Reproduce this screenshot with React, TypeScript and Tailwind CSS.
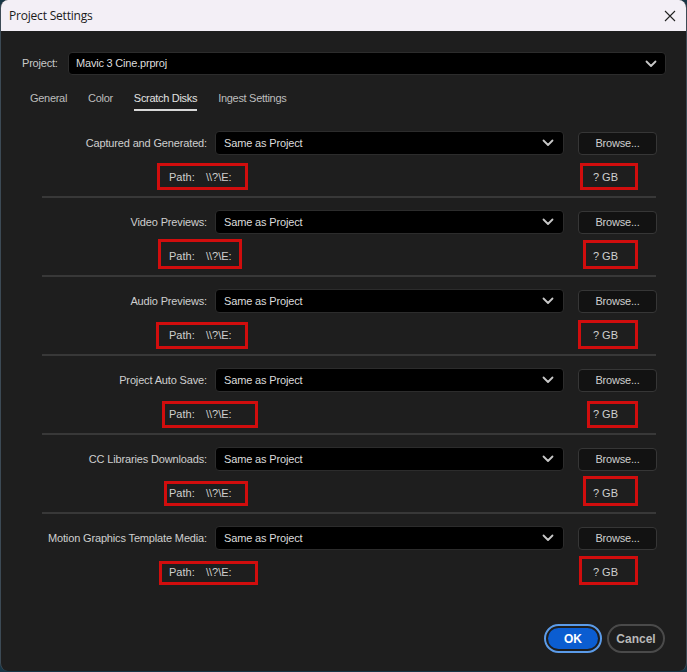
import React from 'react';

type Box = { x: number; y: number; w: number; h: number };

interface DiskRow {
  label: string;
  path: Box;
  gb: Box;
}

const rows: DiskRow[] = [
  { label: 'Captured and Generated:', path: { x: 156, y: 32, w: 91, h: 27 }, gb: { x: 579, y: 32, w: 58, h: 27 } },
  { label: 'Video Previews:', path: { x: 157, y: 29, w: 84, h: 30 }, gb: { x: 582, y: 30, w: 55, h: 29 } },
  { label: 'Audio Previews:', path: { x: 155, y: 33, w: 92, h: 27 }, gb: { x: 577, y: 31, w: 60, h: 29 } },
  { label: 'Project Auto Save:', path: { x: 161, y: 33, w: 96, h: 27 }, gb: { x: 586, y: 33, w: 51, h: 27 } },
  { label: 'CC Libraries Downloads:', path: { x: 163, y: 34, w: 84, h: 25 }, gb: { x: 582, y: 29, w: 55, h: 30 } },
  { label: 'Motion Graphics Template Media:', path: { x: 158, y: 35, w: 99, h: 24 }, gb: { x: 578, y: 30, w: 59, h: 29 } },
];

const font = { fontFamily: '"Liberation Sans", Arial, sans-serif' };

function Chevron() {
  return (
    <svg width="12" height="8" viewBox="0 0 12 8" className="text-[#c8c8c8]">
      <path d="M1.5 1.5 L6 6 L10.5 1.5" fill="none" stroke="currentColor" strokeWidth="1.8" strokeLinecap="round" strokeLinejoin="round" />
    </svg>
  );
}

function RedBox({ b }: { b: Box }) {
  return (
    <div
      className="absolute border-[3px] border-[#d10d0d] pointer-events-none"
      style={{ left: b.x, top: b.y, width: b.w, height: b.h }}
    />
  );
}

export default function App() {
  return (
    <div className="w-[687px] h-[672px] bg-[#173646] overflow-hidden" style={font}>
      <div className="w-[687px] h-[671px] bg-[#1e1e1e] rounded-lg overflow-hidden border-l border-r border-[#3c4a55] flex flex-col">
        {/* title bar */}
        <div className="h-[31px] bg-[#f3eff6] flex items-center justify-between pl-[8px] pr-[10px] shrink-0">
          <span className="text-[12px] tracking-[-0.2px] text-[#1a1a1a]" style={{ fontFamily: '"Open Sans", "Liberation Sans", sans-serif' }}>Project Settings</span>
          <svg width="12" height="12" viewBox="0 0 12 12">
            <path d="M1 1 L11 11 M11 1 L1 11" stroke="#222" strokeWidth="1.1" />
          </svg>
        </div>

        {/* project */}
        <div className="flex items-center mt-[21px] pl-[21px]">
          <span className="text-[11px] tracking-[-0.2px] text-[#c9c9c9] w-[46px]">Project:</span>
          <div className="w-[598px] h-[23px] bg-black rounded-[4px] border border-[#2c2c2c] flex items-center justify-between pl-[7px] pr-[8px]">
            <span className="text-[11px] tracking-[-0.2px] text-[#dcdcdc]">Mavic 3 Cine.prproj</span>
            <Chevron />
          </div>
        </div>

        {/* tabs */}
        <div className="flex items-end pl-[29px] mt-[15px] h-[21px] text-[11px] tracking-[-0.3px] text-[#bdbdbd]">
          <span className="pb-[5px]">General</span>
          <span className="pb-[5px] ml-[21px]">Color</span>
          <span className="pb-[3px] ml-[21px] text-[#e2e2e2] border-b-2 border-[#d8d8d8]">Scratch Disks</span>
          <span className="pb-[5px] ml-[21px]">Ingest Settings</span>
        </div>

        {/* rows */}
        <div className="mt-[20px] flex flex-col">
          {rows.map((r, i) => (
            <div key={r.label} className="relative h-[79px]">
              <div className="flex items-center h-[24px]">
                <span className="w-[206px] text-right text-[11px] tracking-[-0.15px] text-[#cfcfcf] whitespace-nowrap">{r.label}</span>
                <div className="ml-[8px] w-[349px] h-[24px] bg-black rounded-[4px] border border-[#2c2c2c] flex items-center justify-between pl-[8px] pr-[9px]">
                  <span className="text-[11px] tracking-[-0.15px] text-[#dcdcdc]">Same as Project</span>
                  <Chevron />
                </div>
                <div className="ml-[14px] w-[79px] h-[23px] bg-[#121212] rounded-[4px] border border-[#363636] flex items-center justify-center text-[11px] tracking-[-0.2px] text-[#cfcfcf]">
                  Browse...
                </div>
              </div>
              <div className="flex items-center h-[44px] text-[11px] text-[#cfcfcf]">
                <span className="ml-[168px] w-[37px]">Path:</span>
                <span>\\?\E:</span>
                <span className="ml-auto mr-[68px]">? GB</span>
              </div>
              <RedBox b={r.path} />
              <RedBox b={r.gb} />
              {i < rows.length - 1 && (
                <div className="absolute left-[41px] top-[65px] w-[614px] h-[2px] bg-[#383838]" />
              )}
            </div>
          ))}
        </div>

        {/* footer */}
        <div className="flex-1 flex items-end justify-end pr-[21px] pb-[18px] gap-[5px]">
          <div className="w-[58px] h-[29px] rounded-full border-2 border-[#5b9be8] p-[2px]">
            <div className="w-full h-full rounded-full bg-[#0b5dd1] flex items-center justify-center text-[12px] font-bold text-white">OK</div>
          </div>
          <div className="w-[58px] h-[29px] rounded-full border-2 border-[#4a4a4a] flex items-center justify-center text-[12px] font-bold text-[#b8b8b8]">
            Cancel
          </div>
        </div>
      </div>
    </div>
  );
}
